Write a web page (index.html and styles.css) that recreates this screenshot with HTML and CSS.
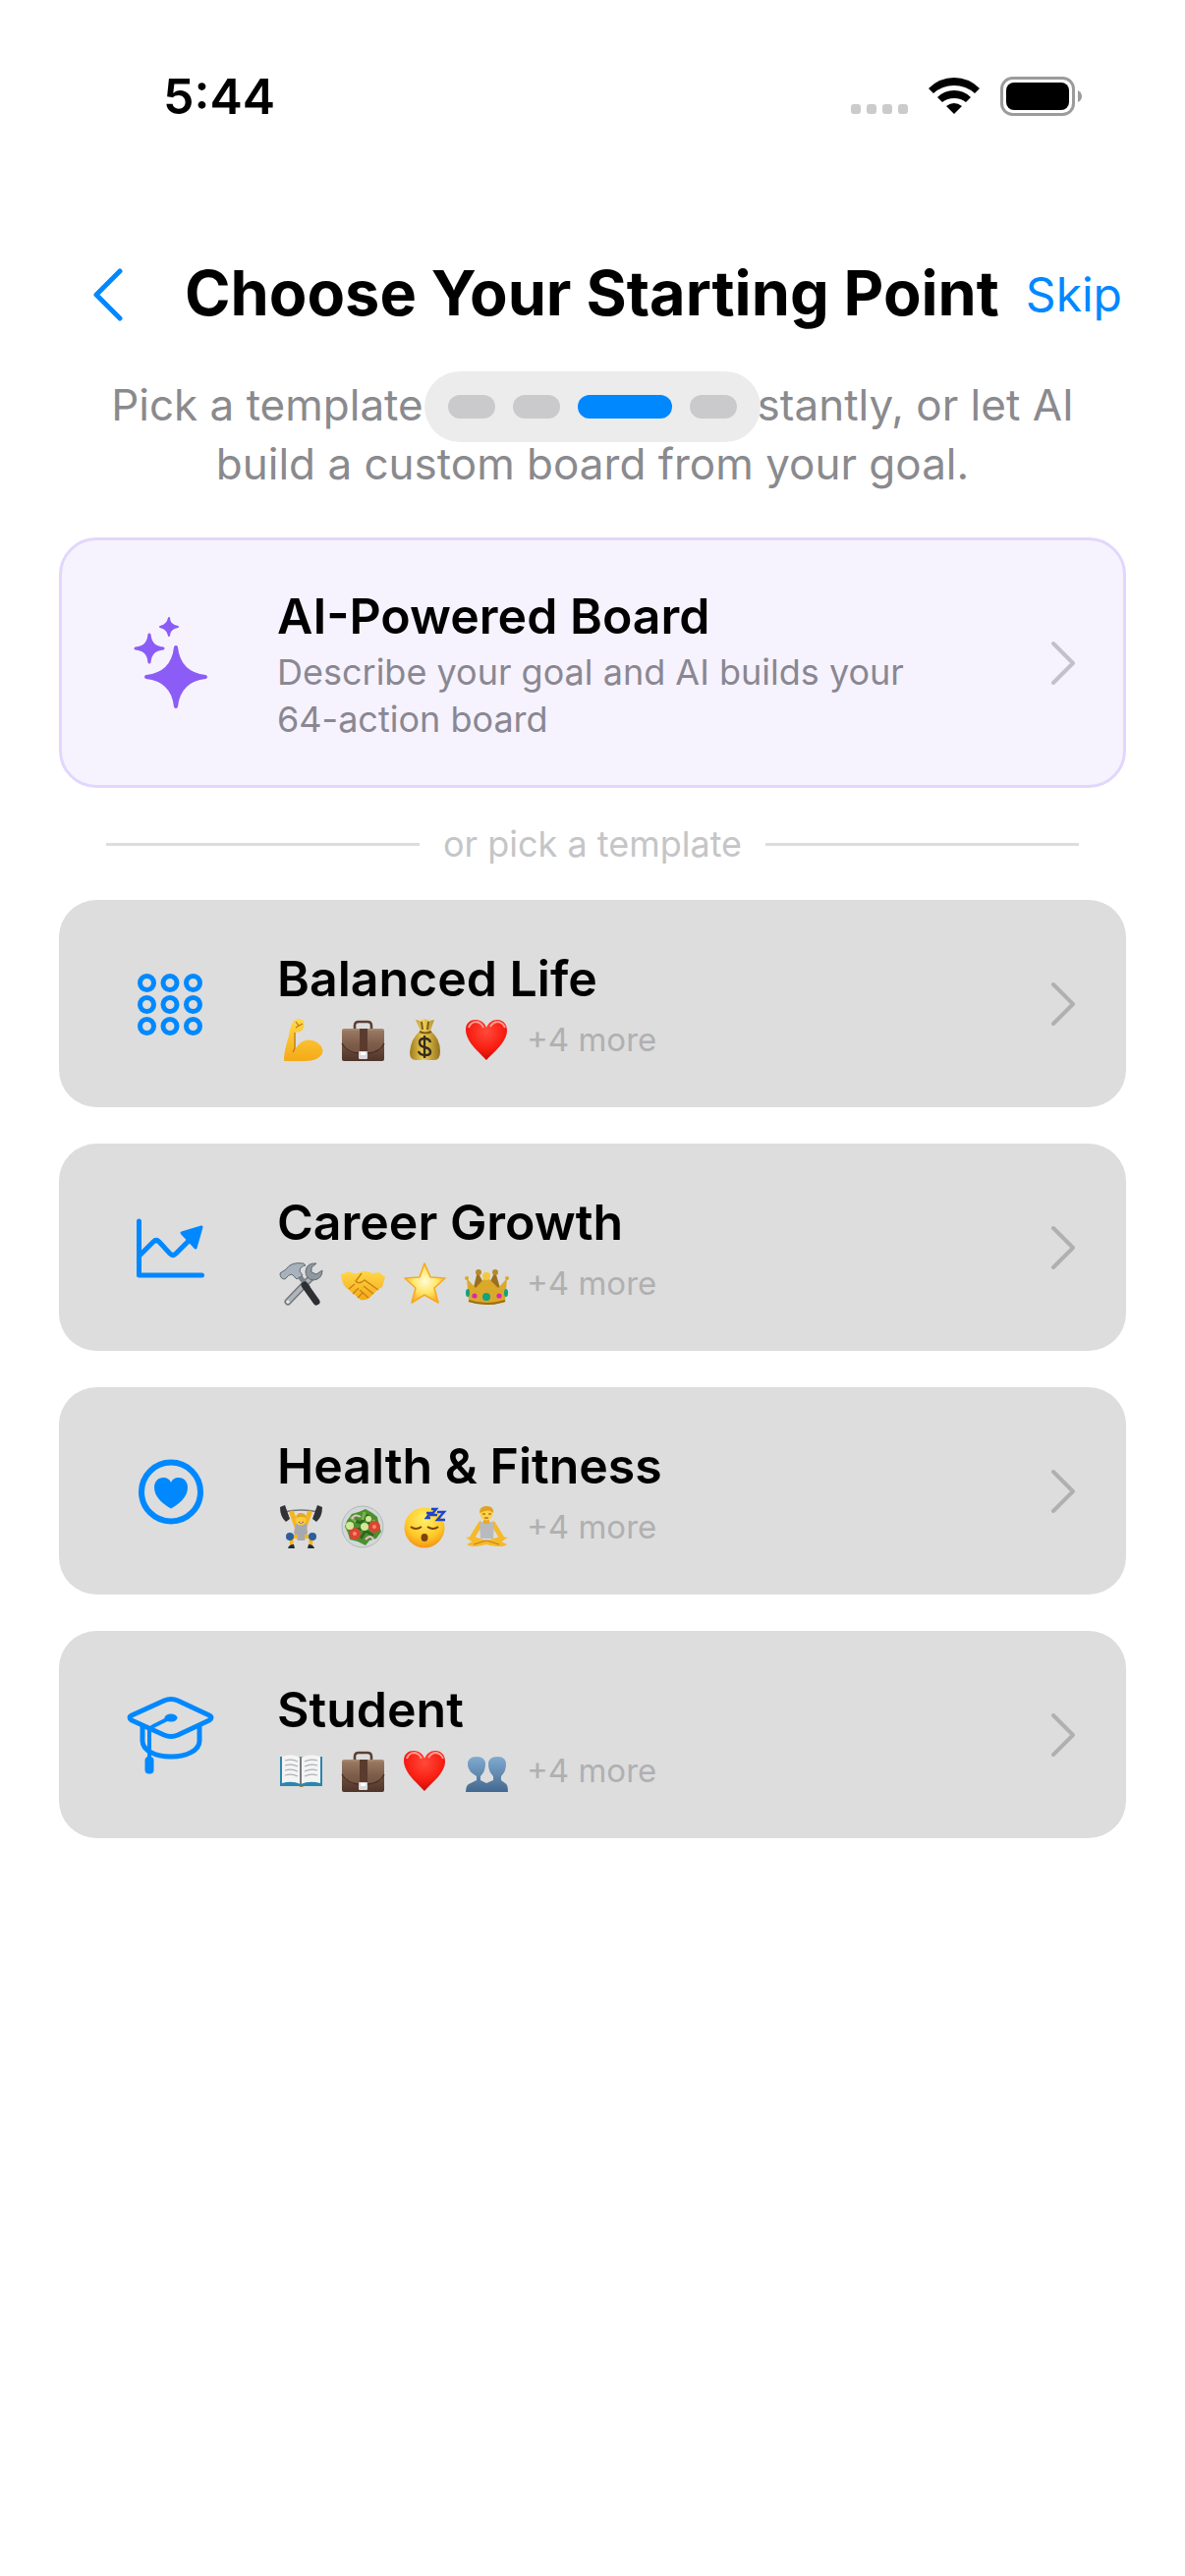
FILE: index.html
```html
<!DOCTYPE html>
<html lang="en">
<head>
    <meta charset="UTF-8">
    <meta name="viewport" content="width=device-width, initial-scale=1.0">
    <title>Choose Your Starting Point</title>
    <link rel="stylesheet" href="styles.css">
</head>
<body>

    <!-- shared emoji drawings -->
    <svg class="defs" aria-hidden="true">
        <defs>
            <linearGradient id="gold" x1="0" y1="0" x2="0" y2="1">
                <stop offset="0" stop-color="#ffd84a"/><stop offset="1" stop-color="#f5a915"/>
            </linearGradient>
            <linearGradient id="leather" x1="0" y1="0" x2="0" y2="1">
                <stop offset="0" stop-color="#a98a72"/><stop offset="0.5" stop-color="#6f4f3f"/><stop offset="1" stop-color="#4f3429"/>
            </linearGradient>
            <radialGradient id="red" cx="0.5" cy="0.3" r="0.75">
                <stop offset="0" stop-color="#ff4a3a"/><stop offset="0.6" stop-color="#f81c10"/><stop offset="1" stop-color="#b80c08"/>
            </radialGradient>
            <linearGradient id="blue" x1="0" y1="0" x2="0" y2="1">
                <stop offset="0" stop-color="#80abd0"/><stop offset="1" stop-color="#44688f"/>
            </linearGradient>
            <linearGradient id="bag" x1="0" y1="0" x2="1" y2="0">
                <stop offset="0" stop-color="#a07a1c"/><stop offset="0.45" stop-color="#efd055"/><stop offset="1" stop-color="#94701a"/>
            </linearGradient>
            <radialGradient id="shine" cx="0.5" cy="0.45" r="0.6">
                <stop offset="0" stop-color="#fffbd8"/><stop offset="0.5" stop-color="#ffe76a"/><stop offset="1" stop-color="#fba51a"/>
            </radialGradient>
            <radialGradient id="face" cx="0.5" cy="0.3" r="0.75">
                <stop offset="0" stop-color="#fff06a"/><stop offset="0.6" stop-color="#ffc928"/><stop offset="1" stop-color="#f08b12"/>
            </radialGradient>
        </defs>

        <symbol id="e-arm" viewBox="0 0 45 45">
            <path d="M5 43C5 35 8 25 10 18C11 12 12 7 15 3C17 1 21 1 24 2C26 4 26 9 24 12C22 15 19 14 17 15L17 31C21 24 28 21 34 23C41 25 46 31 44 36C42 41 35 44 27 44L8 44C6 44 5 44 5 43Z" fill="url(#gold)"/>
            <path d="M16 15L16 31L14 35M17 4L20 8L24 6M20 8L17 10" fill="none" stroke="#b97a16" stroke-width="1.2"/>
        </symbol>

        <symbol id="e-case" viewBox="0 0 45 45">
            <path d="M14 11V8Q14 4 18 4H27Q31 4 31 8V11" fill="none" stroke="#5c4034" stroke-width="2.6"/>
            <rect x="1" y="11" width="43" height="33" rx="2" fill="url(#leather)"/>
            <path d="M1 13V27Q5 35 18 36H27Q40 35 44 27V13Z" fill="#8d6c57" opacity="0.45"/>
            <path d="M1 26Q6 35 18 36H27Q40 35 44 26" fill="none" stroke="#492f25" stroke-width="1.3"/>
            <rect x="19" y="11" width="8" height="24" fill="#5a3b2e"/>
            <rect x="18" y="34" width="9" height="8" rx="1" fill="#d9d9d9"/>
            <rect x="20" y="35" width="5" height="3" fill="#fff"/>
        </symbol>

        <symbol id="e-money" viewBox="0 0 45 45">
            <path d="M13 2L18 3L22 1L27 3L32 2L28 13Q38 21 38 34Q38 43 32 43H13Q7 43 7 35Q8 21 18 13Z" fill="url(#bag)"/>
            <path d="M17 14Q23 17 29 14M19 4L20 12M26 4L25 12" stroke="#7d5c15" stroke-width="2" fill="none"/>
            <path d="M28 25Q27 21 22 21Q17 21 17 25Q17 29 22 30Q28 31 28 35Q28 38 23 38Q17 38 16 34M22 18V41" stroke="#332c1f" stroke-width="2.4" fill="none"/>
        </symbol>

        <symbol id="e-heart" viewBox="0 0 45 45">
            <path d="M22 43C16 36 1 25 1 12C1 5 6 2 11 2C17 2 21 6 22 10C24 5 28 2 33 2C39 2 43 6 43 13C43 25 28 36 22 43Z" fill="url(#red)"/>
            <path d="M4 10Q6 4 12 4Q17 5 19 10M26 9Q29 4 34 4Q39 5 41 10" fill="none" stroke="#ff9b92" stroke-width="2"/>
        </symbol>

        <symbol id="e-tools" viewBox="0 0 45 45">
            <path d="M9 41L32 17" stroke="#777" stroke-width="7" stroke-linecap="round"/>
            <path d="M9 41L32 17" stroke="#aeb5bd" stroke-width="4" stroke-linecap="round"/>
            <path d="M38 2Q28 1 27 10Q27 18 35 19Q44 18 44 9L38 13L33 11L33 6Z" fill="#8f979f" stroke="#626970"/>
            <path d="M20 14L30 27" stroke="#7c858d" stroke-width="5"/>
            <path d="M26 24L38 41" stroke="#2d2f32" stroke-width="7" stroke-linecap="round"/>
            <path d="M1 12L7 8Q12 0 25 2L27 4Q21 5 21 10L24 14L18 18L13 13Q10 13 6 18Q1 18 1 12Z" fill="#a8b2bc" stroke="#626b74"/>
            <circle cx="9" cy="41" r="1.6" fill="#eee"/>
        </symbol>

        <symbol id="e-shake" viewBox="0 0 45 45">
            <path d="M0 13L8 10Q14 14 19 11Q25 8 32 12L39 11L45 16L42 26L37 29L29 37Q25 40 20 39L7 28Q1 25 0 13Z" fill="url(#gold)"/>
            <path d="M21 12L15 20Q18 24 24 19L38 29M23 25L33 33M19 29L28 37M8 28L14 23M12 33L18 27M17 37L22 32" fill="none" stroke="#c88410" stroke-width="1.4"/>
        </symbol>

        <symbol id="e-star" viewBox="0 0 45 45">
            <path d="M22 2L28 16L43 17L32 27L36 42L22 34L9 42L13 27L2 17L17 16Z" fill="url(#shine)" stroke="#f6aa22" stroke-width="1.6" stroke-linejoin="round"/>
        </symbol>

        <symbol id="e-crown" viewBox="0 0 45 45">
            <path d="M7 34L13 10L22 28L31 10L38 34Z" fill="#9b701c"/>
            <circle cx="14" cy="11" r="3" fill="#b8892a"/><circle cx="31" cy="11" r="3" fill="#b8892a"/>
            <path d="M2 17L11 27L22 15L34 27L43 17L41 41Q22 47 4 41Z" fill="#dba92a"/>
            <path d="M4 40Q22 46 41 40" fill="none" stroke="#9c6f14" stroke-width="2"/>
            <circle cx="22" cy="15" r="4" fill="#f3c93f"/>
            <circle cx="2" cy="17" r="2" fill="#d9a92c"/><circle cx="43" cy="17" r="2" fill="#d9a92c"/>
            <circle cx="22" cy="36" r="4" fill="#10a37c"/><circle cx="10" cy="35" r="2.6" fill="#dc25b4"/><circle cx="35" cy="35" r="2.6" fill="#dc25b4"/>
            <ellipse cx="3" cy="32" rx="2" ry="4" fill="#10a37c"/><ellipse cx="42" cy="32" rx="2" ry="4" fill="#10a37c"/>
        </symbol>

        <symbol id="e-lift" viewBox="0 0 45 45">
            <path d="M5 7Q22 3 40 7" fill="none" stroke="#777" stroke-width="1.6"/>
            <path d="M13 8L18 22M31 8L26 22" stroke="#f6b51e" stroke-width="5" stroke-linecap="round"/>
            <path d="M1 2L6 0L11 14L7 17Q1 12 1 2ZM44 2L39 0L34 14L38 17Q44 12 44 2Z" fill="#303236"/>
            <path d="M17 19H28L29 28L26 36H19L15 28Z" fill="#a7a9ae"/>
            <circle cx="22" cy="15" r="5.5" fill="#ffca3b"/>
            <path d="M17 13Q18 8 22 8Q27 8 28 13Q22 11 17 13Z" fill="#e2a824"/>
            <path d="M20 17Q22 20 25 17" fill="#fff" stroke="#8b4b12"/>
            <path d="M19 32H12L13 41M26 32H33L32 41" fill="none" stroke="#f6b51e" stroke-width="4"/>
            <circle cx="11" cy="32" r="4" fill="#2b5f9c"/><circle cx="34" cy="32" r="4" fill="#2b5f9c"/>
            <path d="M9 44Q10 40 15 40L16 44ZM36 44Q35 40 30 40L29 44Z" fill="#1f2b3a"/>
        </symbol>

        <symbol id="e-salad" viewBox="0 0 45 45">
            <circle cx="22" cy="22" r="21" fill="#d2d8d8" stroke="#b0b8b8"/>
            <path d="M6 16L11 9L18 7L25 4L32 8L37 12L39 21L41 27L36 34L29 36L25 41L17 37L9 35L7 28L4 22Z" fill="#4d8f2e"/>
            <path d="M12 15L20 18L28 10M20 34L25 26L33 31M14 25L22 24L29 18" fill="none" stroke="#2d6720" stroke-width="3"/>
            <path d="M10 12L15 17M24 7L22 15M33 15L35 20" stroke="#79b546" stroke-width="3"/>
            <circle cx="14" cy="29" r="6" fill="#dd4432"/><circle cx="34" cy="22" r="6" fill="#dd4432"/>
            <circle cx="14" cy="29" r="2" fill="#f58d75"/><circle cx="34" cy="22" r="2" fill="#f58d75"/>
            <circle cx="9" cy="21" r="4" fill="#d2e79a"/><circle cx="24" cy="22" r="4" fill="#d2e79a"/><circle cx="28" cy="14" r="3" fill="#d2e79a"/>
            <path d="M11 14Q14 8 20 12M25 35Q30 29 33 35" fill="none" stroke="#e9bfd0" stroke-width="2"/>
        </symbol>

        <symbol id="e-sleep" viewBox="0 0 45 45">
            <circle cx="22" cy="23" r="20.5" fill="url(#face)"/>
            <path d="M8 22Q13 26 19 22M25 22Q31 26 36 22" fill="none" stroke="#7a4310" stroke-width="2"/>
            <ellipse cx="22" cy="33" rx="3.5" ry="4" fill="#7a4310"/>
            <path d="M24 8H28L24 13H28M29 4H34L29 10H35M35 7H42L35 15H43" fill="none" stroke="#1d44cf" stroke-width="2.4"/>
        </symbol>

        <symbol id="e-yoga" viewBox="0 0 45 45">
            <path d="M16 19Q11 27 7 34M29 19Q34 27 38 34" fill="none" stroke="#f6b929" stroke-width="5" stroke-linecap="round"/>
            <path d="M15 18Q22 15 30 18L29 34H16Z" fill="#b9babd"/>
            <path d="M1 33L9 32L22 36L36 32L44 33L37 37L43 40Q38 44 22 40Q7 44 2 40L8 37Z" fill="#f6b929"/>
            <path d="M9 40L22 36L35 40" fill="none" stroke="#bd7c13"/>
            <rect x="19" y="13" width="6" height="6" fill="#eda822"/>
            <circle cx="22" cy="9" r="6.5" fill="#ffd04a"/>
            <path d="M15 8Q15 1 22 1Q30 1 29 8Q25 3 15 8Z" fill="#dfa31d"/>
            <path d="M18 9H21M24 9H27M20 13H24" stroke="#8a4e10"/>
        </symbol>

        <symbol id="e-book" viewBox="0 0 45 45">
            <path d="M1 8H44V38H1Z" fill="#2a86ad"/>
            <path d="M3 8Q13 4 22 9Q32 4 42 8V35Q31 32 22 36Q13 32 3 35Z" fill="#f4f4f5"/>
            <path d="M22 9V36" stroke="#77787b" stroke-width="2"/>
            <path d="M6 12Q13 10 19 13M6 17Q13 15 19 18M6 22Q13 20 19 23M6 27Q13 25 19 28M26 13Q32 10 39 12M26 18Q32 15 39 17M26 23Q32 20 39 22M26 28Q32 25 39 27" fill="none" stroke="#aeb0b5" stroke-width="1.3"/>
            <path d="M19 37H26Q23 41 19 37Z" fill="#8a741c"/>
        </symbol>

        <symbol id="e-people" viewBox="0 0 45 45">
            <path d="M1 44Q1 36 6 35L12 32V28Q3 23 3 16Q3 8 12 8Q21 8 21 16Q21 23 16 28V32L22 35L29 32V28Q24 23 24 16Q24 8 33 8Q42 8 42 16Q42 23 37 28V32L41 35Q44 36 44 44Z" fill="url(#blue)"/>
        </symbol>

        <symbol id="chevron" viewBox="0 0 24 45">
            <path d="M2 3L22 23L2 43" fill="none" stroke="currentColor" stroke-width="4" stroke-linecap="round" stroke-linejoin="round"/>
        </symbol>
    </svg>

    <div class="status-bar">
        <span class="time">5:44</span>
        <div class="status-icons">
            <div class="signal"><i></i><i></i><i></i><i></i></div>
            <svg class="wifi" viewBox="0 0 52 38" aria-hidden="true">
                <path d="M0 11Q11 0 26 0Q41 0 52 11L47 16Q38 8 26 8Q14 8 5 16Z"/>
                <path d="M9 20Q16 13 26 13Q36 13 43 20L38 25Q33 21 26 21Q19 21 14 25Z"/>
                <path d="M18 29Q26 23 34 29L26 37Z"/>
            </svg>
            <svg class="battery" viewBox="0 0 84 40" aria-hidden="true">
                <rect x="1.5" y="1.5" width="73" height="37" rx="11" fill="none" stroke="#9b9b9b" stroke-width="3"/>
                <rect x="6" y="6" width="64" height="28" rx="8"/>
                <path d="M79 14Q83 16 83 20Q83 24 79 26Z" fill="#9b9b9b"/>
            </svg>
        </div>
    </div>

    <header class="header">
        <button class="back" aria-label="Back">
            <svg viewBox="0 0 30 54" aria-hidden="true">
                <path d="M27 3L3 27L27 51" fill="none" stroke="currentColor" stroke-width="5" stroke-linecap="round" stroke-linejoin="round"/>
            </svg>
        </button>
        <h1>Choose Your Starting Point</h1>
        <button class="skip">Skip</button>
    </header>

    <main>
        <div class="intro">
            <p>Pick a template to get started instantly, or let AI<br>build a custom board from your goal.</p>
            <div class="steps">
                <span class="step"></span>
                <span class="step"></span>
                <span class="step active"></span>
                <span class="step"></span>
            </div>
        </div>

        <button class="card card-ai">
            <svg class="icon" viewBox="0 0 120 120" aria-hidden="true">
                <g fill="currentColor" stroke="currentColor" stroke-linejoin="round">
                    <path stroke-width="4" d="M65 44C67 62 77 72 95 74C77 76 67 86 65 104C63 86 53 76 35 74C53 72 63 62 65 44Z"/>
                    <path stroke-width="3" d="M38 31C39 40 43 44 52 45C43 46 39 50 38 59C37 50 33 46 24 45C33 44 37 40 38 31Z"/>
                    <path stroke-width="2" d="M58 14C58 19 61 22 67 23C61 24 58 27 58 32C57 27 54 24 49 23C54 22 57 19 58 14Z"/>
                </g>
            </svg>
            <span class="card-text">
                <span class="card-title">AI-Powered Board</span>
                <span class="card-desc">Describe your goal and AI builds your<br>64-action board</span>
            </span>
            <svg class="chevron" aria-hidden="true"><use href="#chevron"/></svg>
        </button>

        <div class="divider">or pick a template</div>

        <div class="templates">
            <button class="card">
                <svg class="icon" viewBox="0 0 120 120" aria-hidden="true">
                    <g fill="none" stroke="currentColor" stroke-width="5">
                        <circle cx="35.5" cy="38.5" r="7"/><circle cx="59" cy="38.5" r="7"/><circle cx="82.5" cy="38.5" r="7"/>
                        <circle cx="35.5" cy="60.5" r="7"/><circle cx="59" cy="60.5" r="7"/><circle cx="82.5" cy="60.5" r="7"/>
                        <circle cx="35.5" cy="82.5" r="7"/><circle cx="59" cy="82.5" r="7"/><circle cx="82.5" cy="82.5" r="7"/>
                    </g>
                </svg>
                <span class="card-text">
                    <span class="card-title">Balanced Life</span>
                    <span class="emojis">
                        <svg><use href="#e-arm"/></svg>
                        <svg><use href="#e-case"/></svg>
                        <svg><use href="#e-money"/></svg>
                        <svg><use href="#e-heart"/></svg>
                        <span class="more">+4 more</span>
                    </span>
                </span>
                <svg class="chevron" aria-hidden="true"><use href="#chevron"/></svg>
            </button>

            <button class="card">
                <svg class="icon" viewBox="0 0 120 120" aria-hidden="true">
                    <g fill="none" stroke="currentColor" stroke-width="5" stroke-linecap="round" stroke-linejoin="round">
                        <path d="M27.5 33V88H91.5"/>
                        <path d="M29 67L42 54Q45 51 48 54L59 66Q62 69 65 66L79 52"/>
                    </g>
                    <path d="M71 45L91 39L85 60Z" fill="currentColor" stroke="currentColor" stroke-width="3" stroke-linejoin="round"/>
                </svg>
                <span class="card-text">
                    <span class="card-title">Career Growth</span>
                    <span class="emojis">
                        <svg><use href="#e-tools"/></svg>
                        <svg><use href="#e-shake"/></svg>
                        <svg><use href="#e-star"/></svg>
                        <svg><use href="#e-crown"/></svg>
                        <span class="more">+4 more</span>
                    </span>
                </span>
                <svg class="chevron" aria-hidden="true"><use href="#chevron"/></svg>
            </button>

            <button class="card">
                <svg class="icon" viewBox="0 0 120 120" aria-hidden="true">
                    <circle cx="60" cy="60.5" r="30" fill="none" stroke="currentColor" stroke-width="6"/>
                    <path d="M60 77.5C52 73 43 66 43 56C43 50 47 46 52 46C56 46 59 48 60 51C61 48 64 46 68 46C73 46 77 50 77 56C77 66 68 73 60 77.5Z" fill="currentColor"/>
                </svg>
                <span class="card-text">
                    <span class="card-title">Health &amp; Fitness</span>
                    <span class="emojis">
                        <svg><use href="#e-lift"/></svg>
                        <svg><use href="#e-salad"/></svg>
                        <svg><use href="#e-sleep"/></svg>
                        <svg><use href="#e-yoga"/></svg>
                        <span class="more">+4 more</span>
                    </span>
                </span>
                <svg class="chevron" aria-hidden="true"><use href="#chevron"/></svg>
            </button>

            <button class="card">
                <svg class="icon" viewBox="0 0 120 120" aria-hidden="true">
                    <g fill="none" stroke="currentColor" stroke-width="5" stroke-linecap="round" stroke-linejoin="round">
                        <path d="M20 40L53 25Q60 22 67 25L99 40Q103 42 99 45L67 60Q60 63 53 60L20 45Q16 42 20 40Z"/>
                        <path d="M31 52V66C31 75 43 82 60 82C77 82 89 75 89 66V52"/>
                        <path d="M58 43L42 51Q38 53 38 57V84" stroke-width="4"/>
                    </g>
                    <ellipse cx="60" cy="42.5" rx="6.5" ry="4" fill="currentColor"/>
                    <rect x="33.5" y="82" width="9" height="17.5" rx="4" fill="currentColor"/>
                </svg>
                <span class="card-text">
                    <span class="card-title">Student</span>
                    <span class="emojis">
                        <svg><use href="#e-book"/></svg>
                        <svg><use href="#e-case"/></svg>
                        <svg><use href="#e-heart"/></svg>
                        <svg><use href="#e-people"/></svg>
                        <span class="more">+4 more</span>
                    </span>
                </span>
                <svg class="chevron" aria-hidden="true"><use href="#chevron"/></svg>
            </button>
        </div>
    </main>

</body>
</html>
```
FILE: styles.css
```css
* {
    box-sizing: border-box;
}

body {
    margin: 0;
    min-height: 100vh;
    background-color: #fff;
    color: #000;
    font-family: Inter, 'Liberation Sans', sans-serif;
}

button {
    border: none;
    background: none;
    padding: 0;
    color: inherit;
    font: inherit;
    cursor: pointer;
}

.defs {
    position: absolute;
    width: 0;
    height: 0;
}

/* status bar */
.status-bar {
    display: flex;
    justify-content: space-between;
    align-items: center;
    padding: 68px 104px 0 166px;
    height: 128px;
}

.time {
    font-size: 50px;
    font-weight: 600;
    line-height: 60px;
}

.status-icons {
    display: flex;
    align-items: center;
    gap: 21px;
}

.signal {
    display: flex;
    align-self: flex-end;
    gap: 6px;
    padding-bottom: 2px;
}

.signal i {
    width: 10px;
    height: 10px;
    border-radius: 3px;
    background-color: #cbcbcb;
}

.wifi {
    width: 52px;
    height: 38px;
}

.battery {
    width: 84px;
    height: 40px;
}

/* header */
.header {
    display: flex;
    justify-content: space-between;
    align-items: center;
    margin-top: 132px;
    padding: 0 64px 0 95px;
    height: 80px;
}

.back {
    display: flex;
    color: #0088ff;
}

.back svg {
    width: 30px;
    height: 54px;
}

h1 {
    flex: 1;
    margin: 0;
    padding-left: 63px;
    font-size: 63px;
    font-weight: 700;
    line-height: 76px;
    padding-bottom: 4px;
    white-space: nowrap;
}

.skip {
    color: #0088ff;
    font-size: 48px;
    line-height: 60px;
}

main {
    padding: 42px 60px;
}

.intro {
    position: relative;
    text-align: center;
}

.intro p {
    margin: 0 0 45px;
    color: #8a8a8e;
    font-size: 44px;
    line-height: 60px;
    white-space: nowrap;
}

/* step indicator floats over the intro text */
.steps {
    position: absolute;
    top: -4px;
    left: 50%;
    display: flex;
    gap: 18px;
    padding: 24px;
    border-radius: 36px;
    background-color: #ececec;
    transform: translateX(-50%);
}

.step {
    width: 48px;
    height: 24px;
    border-radius: 12px;
    background-color: #cacacc;
}

.step.active {
    width: 96px;
    background-color: #0088ff;
}

/* cards */
.card {
    display: flex;
    align-items: center;
    gap: 48px;
    width: 100%;
    padding: 46px 52px 46px 54px;
    border-radius: 38px;
    background-color: #dddddd;
    text-align: left;
}

.card-ai {
    padding: 43px 49px 43px 51px;
    border: 3px solid #e1d7fd;
    background-color: #f6f3fe;
}

.icon {
    flex: none;
    width: 120px;
    height: 120px;
    margin: -4px 0;
    color: #0088ff;
}

.card-ai .icon {
    color: #8b5cf6;
}

.card-text {
    flex: 1;
    display: flex;
    flex-direction: column;
    gap: 10px;
    padding-top: 4px;
}

.card-ai .card-text {
    gap: 3px;
}

.card-title {
    font-size: 50px;
    font-weight: 600;
    line-height: 60px;
}

.card-desc {
    color: #8a8792;
    font-size: 36px;
    line-height: 48px;
}

.emojis {
    display: flex;
    align-items: center;
    gap: 18px;
    padding-left: 2px;
}

.emojis svg {
    width: 45px;
    height: 45px;
}

.more {
    color: #b0b0b2;
    font-size: 33px;
    line-height: 45px;
}

.chevron {
    flex: none;
    width: 24px;
    height: 45px;
    color: #b0b0b2;
}

.card-ai .chevron {
    color: #c2c0c9;
}

.divider {
    display: flex;
    align-items: center;
    gap: 24px;
    padding: 33px 48px;
    color: #c5c5c7;
    font-size: 36px;
    line-height: 48px;
}

.divider::before,
.divider::after {
    content: '';
    flex: 1;
    height: 3px;
    background-color: #dddddd;
}

.templates {
    display: flex;
    flex-direction: column;
    gap: 37px;
}
```
